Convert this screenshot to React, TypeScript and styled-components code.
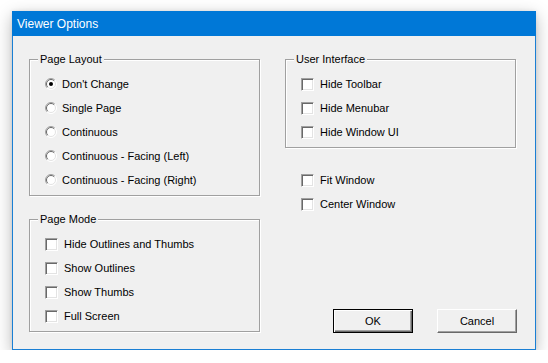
import React, { useState } from 'react';
import styled, { createGlobalStyle } from 'styled-components';

const GlobalStyle = createGlobalStyle`
  html, body {
    margin: 0;
    padding: 0;
    background: #ffffff;
  }
  body {
    font-family: "Liberation Sans", Arial, sans-serif;
    font-size: 11px;
    color: #000;
  }
`;

const Page = styled.div`
  padding: 11px 0 0 12px;
`;

const Window = styled.div`
  width: 524px;
  height: 339px;
  box-sizing: border-box;
  border: 1px solid #1a7fd4;
  border-top: none;
  background: #f0f0f0;
  display: flex;
  flex-direction: column;
  box-shadow: 0 5px 16px rgba(0, 0, 0, 0.28), 0 0 4px rgba(0, 0, 0, 0.08);
`;

const TitleBar = styled.div`
  height: 25px;
  margin: 0 -1px;
  background: #0078d7;
  color: #fff;
  display: flex;
  align-items: center;
  padding-left: 5px;
  font-family: "Liberation Sans", Arial, sans-serif;
  font-size: 12px;
  flex-shrink: 0;
`;

const Content = styled.div`
  flex: 1;
  display: flex;
  gap: 25px;
  padding: 23px 0 16px 16px;
`;

const Column = styled.div`
  width: 231px;
  display: flex;
  flex-direction: column;
`;

const LeftColumn = styled(Column)`
  gap: 23px;
`;

const GroupBox = styled.div`
  position: relative;
  border: 1px solid #a0a0a0;
  box-shadow: inset 1px 1px 0 #ffffff, 1px 1px 0 #ffffff;
  padding: 12px 0 3px 15px;
`;

const Legend = styled.span`
  position: absolute;
  top: -7px;
  left: 8px;
  padding: 0 2px;
  line-height: 13px;
  background: #f0f0f0;
`;

const LooseList = styled.div`
  margin-top: 20px;
  padding-left: 16px;
`;

const Item = styled.label<{ $gap: number }>`
  height: 24px;
  display: flex;
  align-items: center;
  gap: ${p => p.$gap}px;
  white-space: nowrap;
  cursor: default;
`;

const CheckBox = styled.span`
  width: 13px;
  height: 13px;
  box-sizing: border-box;
  flex-shrink: 0;
  background: #fff;
  border: 1px solid;
  border-color: #a0a0a0 #ffffff #ffffff #a0a0a0;
  box-shadow: inset 1px 1px 0 #696969, inset -1px -1px 0 #e3e3e3;
`;

const ButtonRow = styled.div`
  margin-top: auto;
  margin-right: -1px;
  display: flex;
  justify-content: flex-end;
  gap: 24px;
`;

const Button = styled.button<{ $default?: boolean }>`
  width: 80px;
  height: 24px;
  box-sizing: border-box;
  padding: 0;
  background: #f0f0f0;
  font-family: "Liberation Sans", Arial, sans-serif;
  font-size: 11px;
  color: #000;
  border: 1px solid;
  border-color: ${p => (p.$default ? '#000' : '#fff #696969 #696969 #fff')};
  box-shadow: ${p =>
    p.$default
      ? 'inset 1px 1px 0 #fff, inset -1px -1px 0 #696969, inset -2px -2px 0 #a0a0a0'
      : 'inset -1px -1px 0 #a0a0a0'};
  cursor: default;
`;

const Radio: React.FC<{ checked: boolean }> = ({ checked }) => (
  <svg width="12" height="12" viewBox="0 0 12 12" style={{ flexShrink: 0 }}>
    <circle cx="6" cy="6" r="5.5" fill="#fff" />
    <path d="M2.1 9.9 A5.5 5.5 0 0 1 9.9 2.1" stroke="#a0a0a0" fill="none" />
    <path d="M9.9 2.1 A5.5 5.5 0 0 1 2.1 9.9" stroke="#ffffff" fill="none" />
    <path d="M2.8 9.2 A4.5 4.5 0 0 1 9.2 2.8" stroke="#696969" fill="none" />
    <path d="M9.2 2.8 A4.5 4.5 0 0 1 2.8 9.2" stroke="#e3e3e3" fill="none" />
    {checked && <circle cx="6" cy="6" r="2" fill="#000" />}
  </svg>
);

const layouts = [
  "Don't Change",
  'Single Page',
  'Continuous',
  'Continuous - Facing (Left)',
  'Continuous - Facing (Right)',
];

const modes = ['Hide Outlines and Thumbs', 'Show Outlines', 'Show Thumbs', 'Full Screen'];
const uiOptions = ['Hide Toolbar', 'Hide Menubar', 'Hide Window UI'];
const windowOptions = ['Fit Window', 'Center Window'];

const CheckItem: React.FC<{ label: string }> = ({ label }) => (
  <Item $gap={6}>
    <CheckBox />
    {label}
  </Item>
);

const App: React.FC = () => {
  const [layout, setLayout] = useState(0);

  return (
    <Page>
      <GlobalStyle />
      <Window>
        <TitleBar>Viewer Options</TitleBar>
        <Content>
          <LeftColumn>
            <GroupBox>
              <Legend>Page Layout</Legend>
              {layouts.map((l, i) => (
                <Item key={l} $gap={5} onClick={() => setLayout(i)}>
                  <Radio checked={layout === i} />
                  {l}
                </Item>
              ))}
            </GroupBox>
            <GroupBox>
              <Legend>Page Mode</Legend>
              {modes.map(m => (
                <CheckItem key={m} label={m} />
              ))}
            </GroupBox>
          </LeftColumn>
          <Column>
            <GroupBox>
              <Legend>User Interface</Legend>
              {uiOptions.map(u => (
                <CheckItem key={u} label={u} />
              ))}
            </GroupBox>
            <LooseList>
              {windowOptions.map(w => (
                <CheckItem key={w} label={w} />
              ))}
            </LooseList>
            <ButtonRow>
              <Button $default>OK</Button>
              <Button>Cancel</Button>
            </ButtonRow>
          </Column>
        </Content>
      </Window>
    </Page>
  );
};

export default App;
